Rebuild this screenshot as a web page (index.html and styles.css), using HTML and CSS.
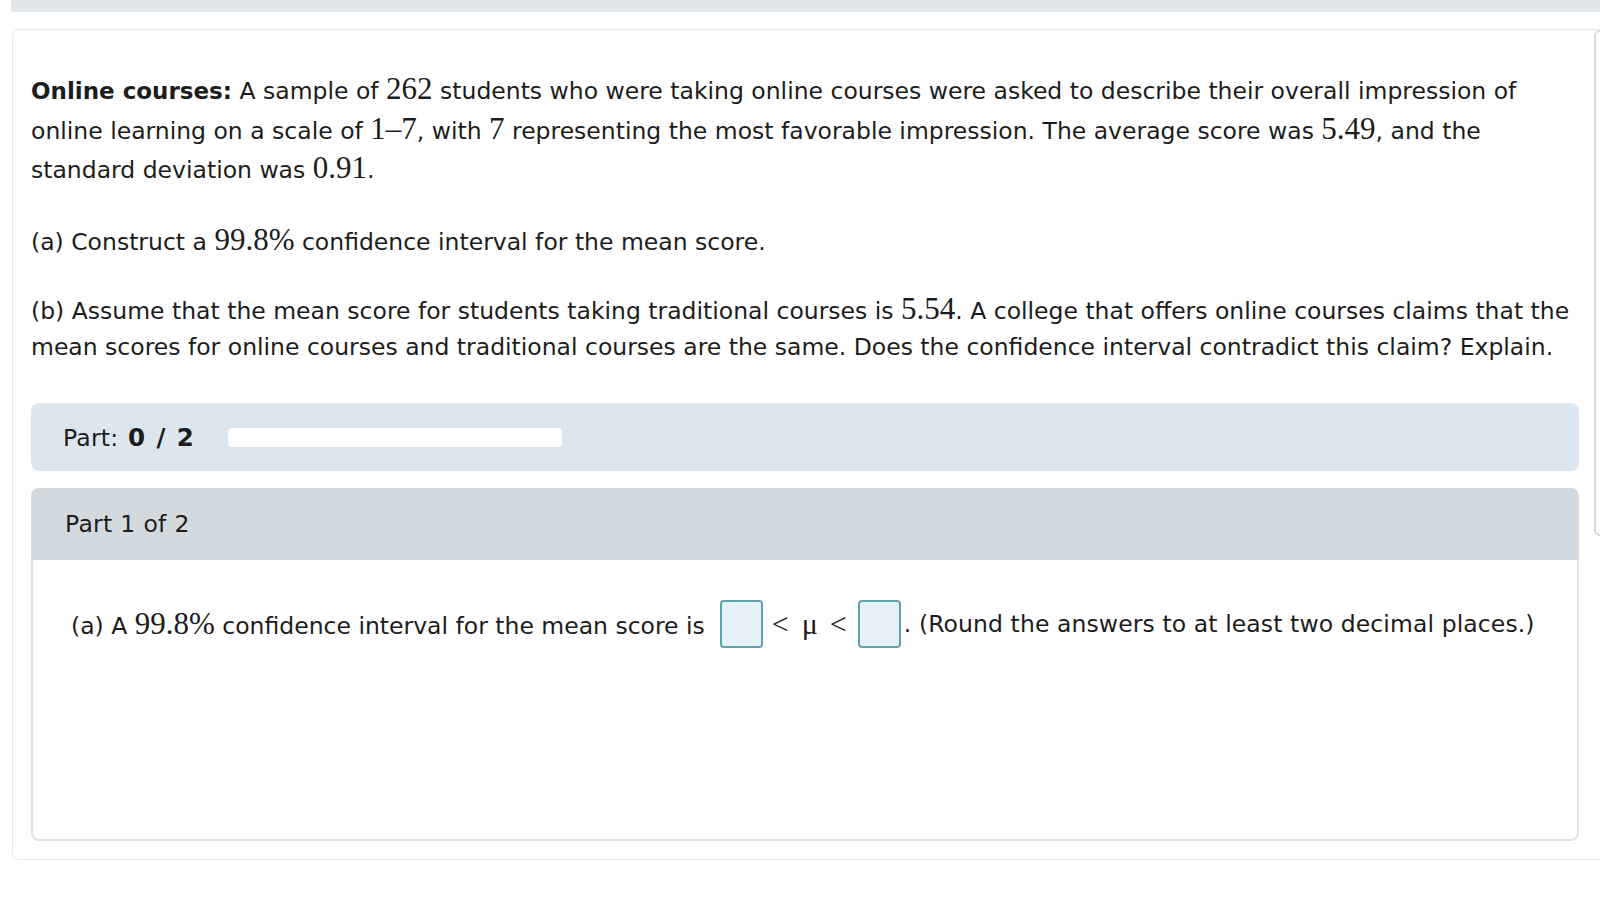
FILE: index.html
```html
<!DOCTYPE html>
<html>
<head>
<meta charset="utf-8">
<link rel="stylesheet" href="styles.css">
</head>
<body>
<div class="topbar"></div>
<div class="card">
  <div class="problem">
    <p class="intro"><b class="lead">Online courses:</b> A sample of <span class="m">262</span> students who were taking online courses were asked to describe their overall impression of online learning on a scale of <span class="m">1–7</span>, with <span class="m">7</span> representing the most favorable impression. The average score was <span class="m">5.49</span>, and the standard deviation was <span class="m">0.91</span>.</p>
    <p class="qa">(a) Construct a <span class="m">99.8%</span> confidence interval for the mean score.</p>
    <p class="qb">(b) Assume that the mean score for students taking traditional courses is <span class="m">5.54</span>. A college that offers online courses claims that the mean scores for online courses and traditional courses are the same. Does the confidence interval contradict this claim? Explain.</p>
  </div>
  <div class="part-progress">
    <span class="part-label">Part: <b class="score">0 / 2</b></span>
    <div class="progress-bar"></div>
  </div>
  <div class="part-section">
    <div class="part-head">Part 1 of 2</div>
    <div class="part-body">
      <div class="answer-line">
        <span>(a) A <span class="m">99.8%</span> confidence interval for the mean score is</span>
        <span class="box first"></span>
        <span class="m op op1">&lt;</span>
        <span class="m mu">μ</span>
        <span class="m op op2">&lt;</span>
        <span class="box second"></span>
        <span class="after">. (Round the answers to at least two decimal places.)</span>
      </div>
    </div>
  </div>
</div>
<div class="side-tab"></div>
</body>
</html>
```

FILE: styles.css
```css
html, body {
  margin: 0;
  padding: 0;
  background: #ffffff;
  overflow: hidden;
  height: 905px;
}
body {
  font-family: "DejaVu Sans", Verdana, sans-serif;
  font-size: 23.5px;
  color: #1c1c1c;
  position: relative;
}
.topbar {
  height: 12px;
  margin-left: 11px;
  background: #e0e6e9;
  border-bottom-left-radius: 3px;
}
.card {
  margin: 17px -20px 0 12px;
  border: 1px solid #e6eaed;
  border-radius: 7px;
  padding: 42px 40px 18px 18px;
}
.problem p {
  margin: 0;
}
.lead {
  font-size: 23px;
}
.m {
  font-family: "Liberation Serif", "Times New Roman", serif;
  font-size: 31px;
  line-height: 1;
}
.intro {
  line-height: 39.5px;
}
.qa {
  margin-top: 33.5px !important;
  line-height: 36px;
}
.qb {
  margin-top: 33px !important;
  line-height: 36px;
}
.part-progress {
  margin-top: 38px;
  height: 68px;
  background: #dce6ef;
  border-radius: 8px;
  display: flex;
  align-items: center;
  padding-left: 32px;
  gap: 34px;
}
.part-label {
  letter-spacing: 0.2px;
}
.score {
  font-weight: bold;
  font-size: 24.5px;
  word-spacing: 2.5px;
  margin-left: 2px;
}
.progress-bar {
  width: 334px;
  height: 19px;
  background: #ffffff;
  border-radius: 4px;
}
.part-section {
  margin-top: 17px;
}
.part-head {
  height: 72px;
  background: #d3dadf;
  border-radius: 8px 8px 0 0;
  display: flex;
  align-items: center;
  padding-left: 34px;
  letter-spacing: 0.3px;
}
.part-body {
  height: 281px;
  box-sizing: border-box;
  border: 2px solid #dde3e8;
  border-top: none;
  border-radius: 0 0 8px 8px;
  padding: 40px 0 0 38px;
}
.answer-line {
  display: flex;
  align-items: center;
  height: 48px;
  white-space: nowrap;
}
.box {
  display: inline-block;
  width: 39px;
  height: 44px;
  border: 2px solid #62a1b0;
  background: #e7f2f8;
  border-radius: 4px;
}
.box.first {
  margin-left: 15px;
}
.op {
  font-size: 30px;
}
.op1 {
  margin-left: 9px;
}
.mu {
  font-size: 30px;
  margin-left: 13px;
}
.op2 {
  margin-left: 12px;
}
.box.second {
  margin-left: 11px;
}
.after {
  margin-left: 3px;
  letter-spacing: 0.1px;
}
.side-tab {
  position: absolute;
  left: 1594px;
  top: 30px;
  width: 30px;
  height: 506px;
  box-sizing: border-box;
  border: 2px solid #d3dade;
  border-right: none;
  border-radius: 6px 0 0 6px;
  background: #ffffff;
}
```
